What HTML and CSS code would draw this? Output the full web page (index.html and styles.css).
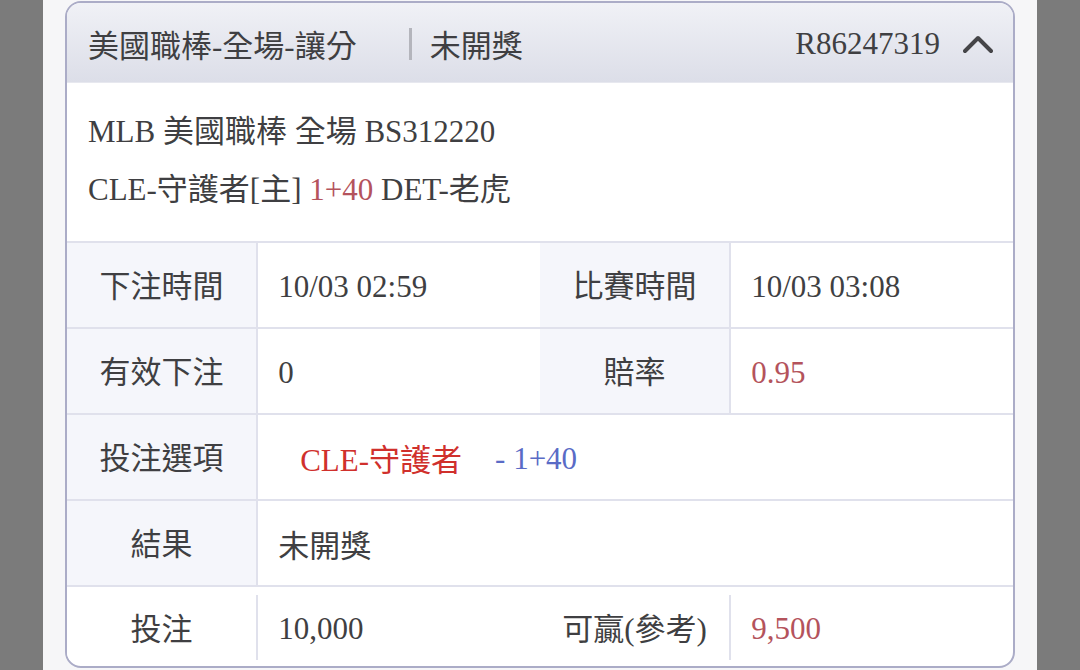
FILE: index.html
```html
<!DOCTYPE html>
<html lang="zh-Hant">
<head>
    <meta charset="UTF-8">
    <meta name="viewport" content="width=device-width, initial-scale=1.0">
    <title>注單明細</title>
    <link rel="stylesheet" href="styles.css">
</head>
<body>
    <div class="page">
        <div class="bet-card">
            <div class="card-header">
                <span class="bet-type">美國職棒-全場-讓分</span>
                <span class="divider"></span>
                <span class="status">未開獎</span>
                <span class="order-no">R86247319</span>
                <svg class="chevron" width="30" height="20" viewBox="0 0 30 20">
                    <polyline points="2,17 15,4 28,17" fill="none" stroke="#454548" stroke-width="4" stroke-linecap="round" stroke-linejoin="round"/>
                </svg>
            </div>

            <div class="match-info">
                <p>MLB 美國職棒 全場 BS312220</p>
                <p>CLE-守護者[主] <span class="odds">1+40</span> DET-老虎</p>
            </div>

            <div class="row">
                <div class="label">下注時間</div>
                <div class="value">10/03 02:59</div>
                <div class="label">比賽時間</div>
                <div class="value">10/03 03:08</div>
            </div>
            <div class="row">
                <div class="label">有效下注</div>
                <div class="value">0</div>
                <div class="label">賠率</div>
                <div class="value odds">0.95</div>
            </div>
            <div class="row">
                <div class="label">投注選項</div>
                <div class="value wide">
                    <span class="pick">CLE-守護者</span>
                    <span class="handicap">- 1+40</span>
                </div>
            </div>
            <div class="row">
                <div class="label">結果</div>
                <div class="value wide">未開獎</div>
            </div>
            <div class="row total">
                <div class="label">投注</div>
                <div class="value">10,000</div>
                <div class="label">可贏(參考)</div>
                <div class="value odds">9,500</div>
            </div>
        </div>
    </div>
</body>
</html>
```

FILE: styles.css
```css
* {
    margin: 0;
    padding: 0;
    box-sizing: border-box;
}

body {
    background: #7b7b7b;
    font-family: 'Liberation Serif', 'Noto Sans CJK TC', serif;
    font-size: 31px;
    color: #3f3f42;
    height: 670px;
    overflow: hidden;
}

.page {
    margin: 0 43px;
    height: 670px;
    background: #f6f6f8;
    padding: 1px 22px 0;
}

.bet-card {
    background: #ffffff;
    border: 2px solid #abacc7;
    border-radius: 16px;
    overflow: hidden;
}

.card-header {
    display: flex;
    align-items: center;
    height: 80px;
    padding: 2px 20px 0 21px;
    background: linear-gradient(180deg, #f0f1f6, #dcdee8);
    border-bottom: 1px solid #e7e8ef;
}

.divider {
    width: 3px;
    height: 32px;
    background: #b4b5bc;
    margin: 0 18px 0 52px;
}

.order-no {
    margin-left: auto;
    margin-right: 23px;
}

.chevron {
    display: block;
}

.match-info {
    padding: 20px 21px 22px;
    line-height: 58px;
}

.odds {
    color: #b4535c;
}

.row {
    display: grid;
    grid-template-columns: 20% 30% 20% 30%;
    height: 86px;
    border-top: 2px solid #e0e1ec;
}

.label,
.value {
    display: flex;
    align-items: center;
}

.label {
    justify-content: center;
    background: #f5f6fb;
    padding-bottom: 3px;
}

.value {
    padding: 3px 0 0 20px;
}

.label + .value {
    border-left: 2px solid #e0e1ec;
}

.value.wide {
    grid-column: span 3;
    padding-top: 0;
}

.pick {
    color: #d0302c;
    margin-left: 22px;
    margin-right: 33px;
}

.handicap {
    color: #5a6bc6;
    white-space: pre;
    padding-top: 3px;
}

.row.total {
    height: 81px;
    padding: 8px 0 6px;
}

.row.total .label {
    background: #ffffff;
}
```
